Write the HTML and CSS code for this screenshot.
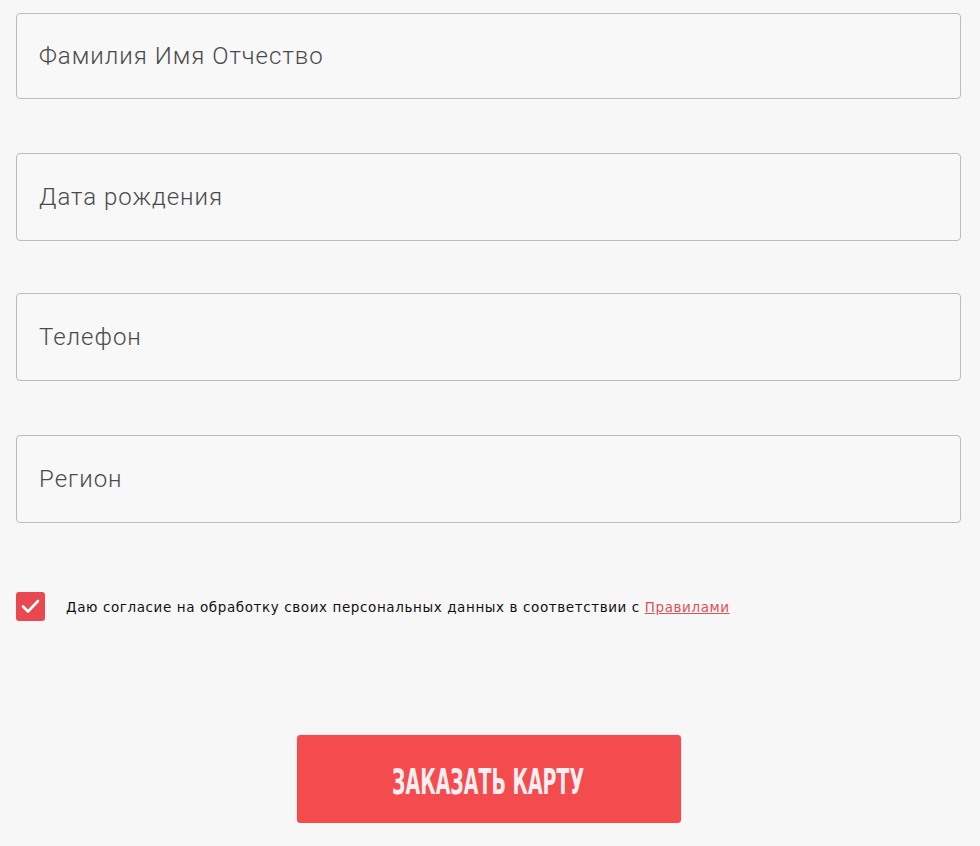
FILE: index.html
```html
<!DOCTYPE html>
<html lang="ru">
<head>
<meta charset="utf-8">
<link rel="stylesheet" href="styles.css">
</head>
<body>
<form class="form">
  <div class="field field-first">Фамилия Имя Отчество</div>
  <div class="field field-narrow-gap">Дата рождения</div>
  <div class="field">Телефон</div>
  <div class="field">Регион</div>
  <label class="agree">
    <span class="check">
      <svg width="19" height="15" viewBox="0 0 19 15"><path d="M2 7.5 L7 12.5 L17 2" fill="none" stroke="#fff" stroke-width="2.6" stroke-linecap="round" stroke-linejoin="round"/></svg>
    </span>
    <span class="agree-text">Даю согласие на обработку своих персональных данных в соответствии с <a class="rules" href="#">Правилами</a></span>
  </label>
  <div class="actions">
    <button type="button" class="btn"><span class="btn-label">ЗАКАЗАТЬ КАРТУ</span></button>
  </div>
</form>
</body>
</html>
```
FILE: styles.css
```css
html, body {
  margin: 0;
  padding: 0;
  background: #f7f7f7;
}
.form {
  width: 945px;
  padding: 13px 0 0 16px;
  display: flex;
  flex-direction: column;
}
.field {
  box-sizing: border-box;
  height: 88px;
  border: 1px solid #bcbcbc;
  border-radius: 4px;
  background: #f8f8f8;
  padding: 0 22px;
  display: flex;
  align-items: center;
  font-family: Roboto, "Liberation Sans", sans-serif;
  font-weight: 300;
  font-size: 24px;
  color: #4a4a4a;
  letter-spacing: 1px;
  margin-bottom: 54px;
}
.field-first { height: 86px; }
.field-narrow-gap { margin-bottom: 52px; }
.agree {
  display: flex;
  align-items: center;
  margin-top: 15px;
}
.check {
  width: 29px;
  height: 29px;
  border-radius: 3px;
  background: #e8484f;
  display: flex;
  align-items: center;
  justify-content: center;
  flex: none;
}
.agree-text {
  margin-left: 21px;
  font-family: "DejaVu Sans", sans-serif;
  font-size: 13.5px;
  color: #111;
  letter-spacing: 0.6px;
}
.rules {
  color: #e0505a;
  text-decoration: underline;
}
.actions {
  display: flex;
  justify-content: center;
  margin-top: 114px;
}
.btn {
  width: 384px;
  height: 88px;
  padding: 4px 0 0;
  border: none;
  border-radius: 4px;
  background: #f44b4f;
  box-shadow: 0 0 1px rgba(150, 40, 40, 0.6);
  display: flex;
  align-items: center;
  justify-content: center;
  cursor: pointer;
}
.btn-label {
  display: inline-block;
  font-family: "DejaVu Sans Condensed", "DejaVu Sans", sans-serif;
  font-weight: bold;
  font-size: 36px;
  color: #fbeef0;
  transform: scaleX(0.585);
  white-space: nowrap;
}
```
